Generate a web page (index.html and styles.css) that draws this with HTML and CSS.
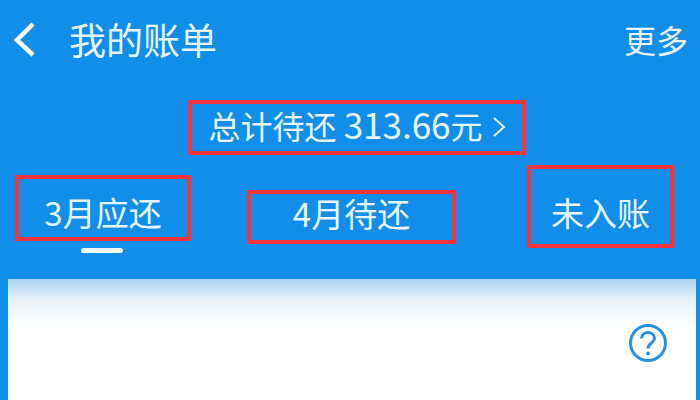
FILE: index.html
```html
<!DOCTYPE html>
<html lang="zh-CN">
<head>
    <meta charset="UTF-8">
    <meta name="viewport" content="width=device-width, initial-scale=1.0">
    <title>我的账单</title>
    <link rel="stylesheet" href="styles.css">
</head>
<body>
    <div class="page">
        <div class="header">
            <svg class="back" width="24" height="36" viewBox="0 0 24 36">
                <path d="M21 3 L5 19 L21 34" fill="none" stroke="#fff" stroke-width="4.5"/>
            </svg>
            <span class="title">我的账单</span>
            <span class="more">更多</span>
        </div>

        <div class="summary">
            <span class="total">
                <span>总计待还 <span class="amount">313.66</span>元</span>
                <svg class="arrow" width="14" height="22" viewBox="0 0 14 22">
                    <path d="M2 2 L12 11 L2 20" fill="none" stroke="#e6f3fc" stroke-width="2"/>
                </svg>
            </span>
        </div>

        <div class="tabs">
            <div class="tab tab-current">3月应还</div>
            <div class="tab tab-next">4月待还</div>
            <div class="tab tab-pending">未入账</div>
        </div>
        <div class="underline"></div>

        <div class="card">
            <svg class="help" width="40" height="40" viewBox="0 0 40 40">
                <circle cx="20" cy="20" r="17.5" fill="none" stroke="#2b93de" stroke-width="3"/>
                <path d="M13.5 15.5 C13.5 7.5 26.5 7.5 26.5 15.5 C26.5 20 20 20 20 25.5" fill="none" stroke="#2b93de" stroke-width="3"/>
                <circle cx="20" cy="30.5" r="2" fill="#2b93de"/>
            </svg>
        </div>
    </div>
</body>
</html>
```

FILE: styles.css
```css
* {
    box-sizing: border-box;
}

body {
    margin: 0;
    font-family: "Noto Sans CJK SC", "Liberation Sans", sans-serif;
}

.page {
    width: 700px;
    height: 400px;
    overflow: hidden;
    background: #108eea;
    color: #e6f3fc;
}

/* 顶部导航 */
.header {
    display: flex;
    align-items: center;
    height: 78px;
    padding: 0 12px 0 12px;
}

.back {
    margin-right: 33px;
}

.title {
    font-size: 37px;
    flex: 1;
}

.more {
    font-size: 32px;
}

/* 总计 */
.summary {
    display: flex;
    justify-content: center;
    padding: 22px 0 0 14px;
}

.total {
    display: flex;
    align-items: center;
    justify-content: center;
    gap: 9px;
    width: 338px;
    height: 55px;
    padding-bottom: 8px;
    border: 4px solid #f5333a;
    font-size: 32px;
    white-space: nowrap;
}

.amount {
    font-size: 35px;
}

.arrow {
    margin-top: 6px;
}

/* 标签 */
.tabs {
    display: flex;
    align-items: flex-start;
    height: 93px;
    padding-top: 10px;
}

.tab {
    display: flex;
    align-items: center;
    justify-content: center;
    border: 4px solid #f5333a;
    font-size: 33px;
}

.tab-current {
    width: 176px;
    height: 66px;
    margin: 10px 0 0 15px;
    padding-top: 8px;
}

.tab-next {
    width: 209px;
    height: 54px;
    margin: 25px 0 0 56px;
    padding-bottom: 8px;
}

.tab-pending {
    width: 147px;
    height: 83px;
    margin: 0 0 0 71px;
    padding-top: 10px;
}

.underline {
    width: 42px;
    height: 5px;
    margin: 0 0 0 81px;
    border-radius: 3px;
    background: #fff;
}

/* 内容卡片 */
.card {
    display: flex;
    justify-content: flex-end;
    height: 130px;
    margin: 26px 4px 0 8px;
    padding: 44px 28px 0 0;
    background: linear-gradient(#a9d2ef 0, #eaf4fb 22px, #fff 50px);
}
```
